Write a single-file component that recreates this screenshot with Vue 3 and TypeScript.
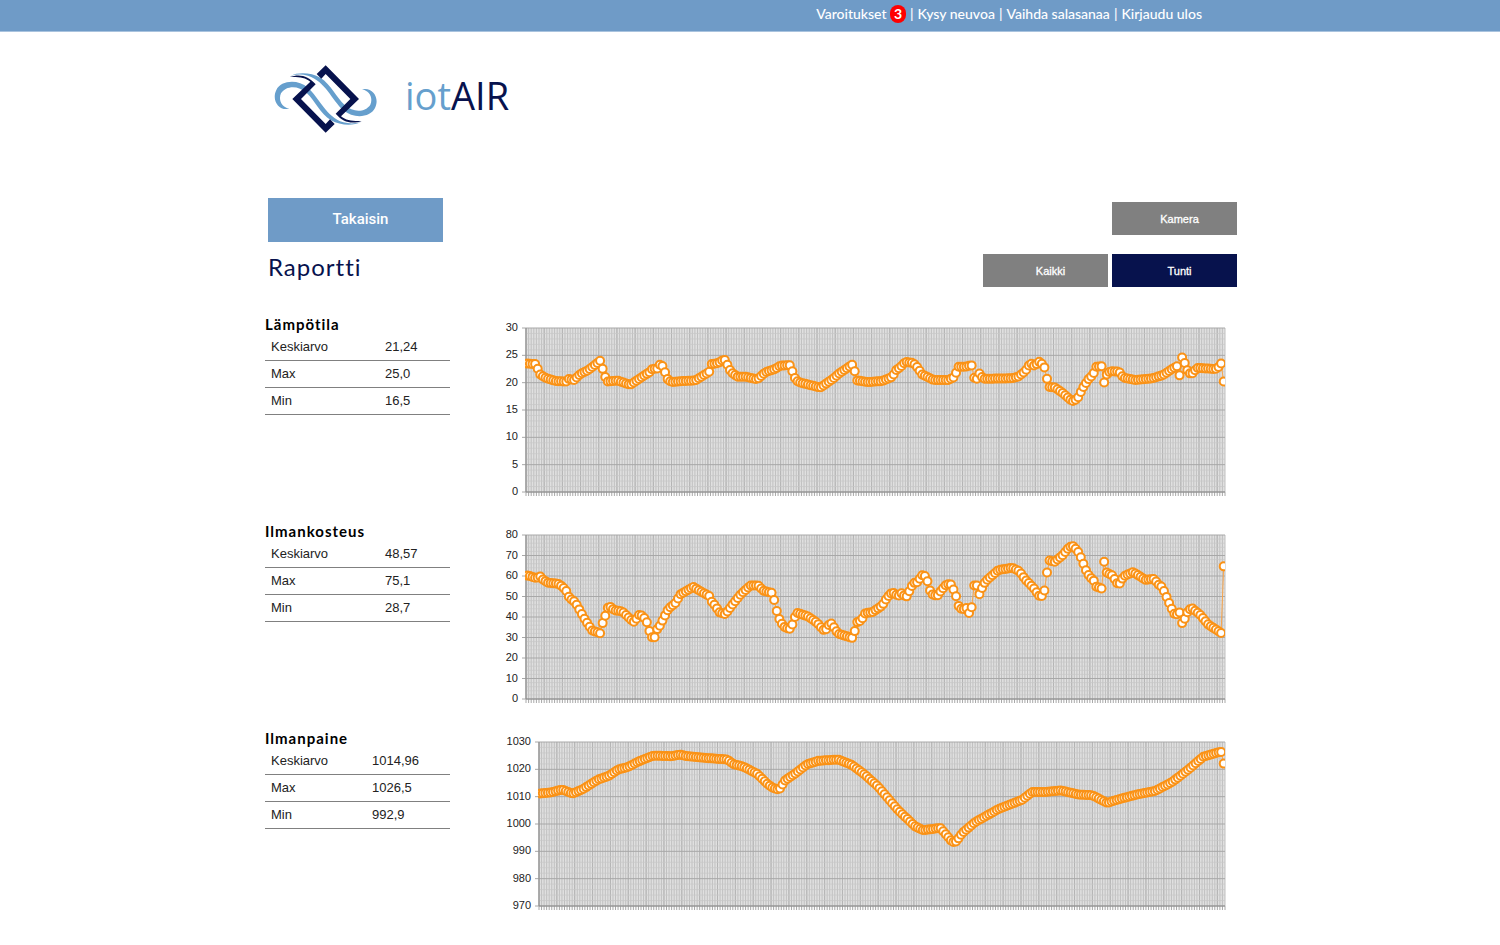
<script setup lang="ts">
import { ref } from 'vue'

type Knot = [number, number]

interface Series {
  id: string
  title: string
  average: string
  max: string
  min: string
  low: number
  high: number
  step: number
  left: number
  wide: boolean
  knots: Knot[]
}

const SAMPLES = 269
const RIGHT = 730
const TOP = 10
const HEIGHT = 164

const sources: Series[] = [
  {
    id: 'temperature',
    title: 'Lämpötila',
    average: '21,24',
    max: '25,0',
    min: '16,5',
    low: 0,
    high: 30,
    step: 5,
    left: 31,
    wide: false,
    knots: [
      [0, 23.5], [8, 23.4], [10.5, 22.5], [13, 21.5], [18, 20.9], [28, 20.3], [39, 20.2], [41, 20.7], [47, 20.5],
      [53, 21.6], [61, 22.3], [72.8, 24], [75.4, 22.5], [78, 21], [80.6, 20.2], [90, 20.4], [103, 19.6], [111, 20.6],
      [122, 21.9], [125, 22.5], [130, 22.6], [132, 23.3], [135, 23.1], [138, 21.8], [140, 20.7], [144, 20.1],
      [155, 20.3], [168, 20.4], [182, 22], [184.5, 23.4], [191, 23.6], [196, 24.2], [198.5, 24.1], [201, 22.8],
      [204, 21.9], [210, 21.1], [218, 21.1], [230, 20.6], [238, 21.9], [248, 22.5], [253, 23.1], [262.4, 23.2],
      [265, 22.1], [267.5, 20.9], [271, 20.1], [293, 19.1], [305, 20.6], [312, 21.7], [324.8, 23.3], [327.4, 22.1],
      [330, 20.4], [341, 20.1], [355, 20.3], [365.5, 21.1], [368, 22.2], [373, 22.8], [378, 23.8], [386, 23.6],
      [390, 22.8], [395, 21.5], [406, 20.5], [421, 20.5], [426, 20.9], [428.5, 21.7], [431, 22.9], [438, 22.9],
      [444.3, 23.2], [446.9, 20.9], [449.5, 20.7], [452, 21.7], [456, 20.7], [485, 20.8], [491, 21.1], [498, 22.1],
      [503, 23.6], [508, 23], [511, 23.9], [514, 23.6], [517.1, 22.8], [519.7, 20.7], [522.3, 19.2], [528, 19.1],
      [536, 18], [545, 16.6], [550, 17], [556, 19.2], [561, 20.6], [566, 21.5], [568.5, 22.9], [574.3, 23],
      [576.9, 20], [579.5, 21.5], [583, 22.1], [592, 22], [596, 20.9], [608, 20.5], [625, 20.8], [636, 21.4],
      [643, 22.3], [649.6, 23], [652.2, 21.3], [654.8, 24.6], [657.4, 23.6], [660, 22.3], [662, 21.7], [665, 21.7],
      [670, 22.7], [688, 22.5], [691, 22.8], [693.8, 23.5], [696.3, 20.2],
    ],
  },
  {
    id: 'humidity',
    title: 'Ilmankosteus',
    average: '48,57',
    max: '75,1',
    min: '28,7',
    low: 0,
    high: 80,
    step: 10,
    left: 31,
    wide: false,
    knots: [
      [1, 60.2], [9, 59], [13, 59.8], [16, 58.1], [21, 56.7], [31, 56.2], [35, 54.9], [40, 52.1], [42, 49.3],
      [48, 47.2], [58, 38.4], [65, 33.4], [72.8, 32.1], [75.4, 37.1], [78, 40.7], [80.6, 44.6], [83, 45], [87, 43.3],
      [95, 42.7], [101, 39.9], [106, 37.6], [108, 38.1], [111, 41], [115, 40.7], [119, 38.3], [122.1, 33.2],
      [124.7, 30.1], [127.3, 30.1], [130, 34.2], [132, 35.2], [136, 39.1], [141, 44], [148, 46.7], [153, 51],
      [166, 54.7], [173, 52.6], [182, 50.2], [185, 46.9], [188, 45.6], [192, 42.3], [198, 41.4], [205, 45.9],
      [213, 50.8], [223, 55.4], [231, 55.4], [236, 52.8], [244.3, 51.8], [246.9, 48.2], [249.5, 42.8], [252, 39.1],
      [256, 35.5], [262, 33.9], [265, 36.3], [267, 39.4], [270, 42], [281, 40.2], [290, 37.1], [296, 33.7],
      [299, 34], [302, 36.6], [305, 37], [307, 34.5], [311, 31.8], [324.8, 29.8], [327.4, 33.1], [330, 37.5],
      [334, 38.3], [338, 41.9], [345, 42.3], [355, 45.6], [360, 49.7], [365, 52.1], [371, 50.2], [374, 51.6],
      [379, 49.7], [381, 51.6], [386, 56.5], [390, 57], [395, 60.4], [398, 59.9], [400, 57.8], [402, 53.6],
      [405, 51.1], [410, 50.2], [413, 52.4], [418, 55.4], [423, 56.4], [426, 53.6], [429, 49.8], [431, 45.6],
      [435, 43.5], [439, 44.5], [441.7, 41.9], [444.3, 44.6], [446.9, 55.4], [449.5, 55.4], [452.1, 51.1],
      [454.7, 54.1], [458, 57.3], [465, 60.3], [471, 62.9], [485, 64], [492, 62.4], [498, 58.3], [508, 53.3],
      [511, 50.5], [514.5, 50.2], [517.1, 52.9], [519.7, 61.7], [522.3, 67.6], [527, 66.8], [535, 70], [541, 73.6],
      [545, 74.9], [550, 72.5], [553, 69.7], [556, 66.1], [559, 62.4], [563, 59.1], [566, 58.6], [568, 55],
      [574.3, 53.9], [576.9, 67.1], [579.5, 61.6], [585, 60.3], [590, 56.4], [593, 56.4], [596, 59.8],
      [606, 61.9], [618, 58.1], [627, 58.6], [631, 55.9], [635, 54.6], [638, 51.1], [640, 49], [643, 45.4],
      [648, 40.7], [652.2, 42.3], [654.8, 37], [657.4, 39.1], [660, 42.3], [664, 44.6], [673, 41], [681, 36.3],
      [693.8, 32.2], [696.3, 64.7],
    ],
  },
  {
    id: 'pressure',
    title: 'Ilmanpaine',
    average: '1014,96',
    max: '1026,5',
    min: '992,9',
    low: 970,
    high: 1030,
    step: 10,
    left: 44,
    wide: true,
    knots: [
      [1, 1011.2], [10, 1011.5], [22, 1012.6], [32, 1011.1], [42, 1012.6], [58, 1016.3], [68, 1017.5],
      [78, 1019.9], [88, 1020.9], [98, 1022.8], [113, 1025], [132, 1024.8], [139, 1025.4], [147, 1024.8],
      [168, 1024.1], [187, 1023.6], [193, 1021.9], [203, 1021], [217, 1018.3], [227, 1014.7], [233, 1013.1],
      [239, 1012.6], [245, 1016], [255, 1018.5], [267, 1021.9], [278, 1023.1], [298, 1023.6], [312, 1021.5],
      [325, 1017.9], [338, 1013.6], [358, 1005], [375, 999.1], [383, 997.7], [400, 998.6], [412, 993.4],
      [416, 993.6], [422, 996.7], [435, 1000.7], [458, 1005.4], [482, 1008.9], [492, 1011.7], [505, 1011.7],
      [520, 1012.3], [538, 1010.8], [552, 1010.5], [567, 1007.7], [578, 1009], [598, 1010.9], [615, 1012.1],
      [632, 1015.4], [648, 1019.9], [663, 1024.6], [680.8, 1026.5], [683.4, 1022.1],
    ],
  },
]

function valueAt(knots: Knot[], x: number): number {
  const next = knots.findIndex((k) => k[0] >= x)
  if (next === -1) return knots[knots.length - 1][1]
  if (next === 0) return knots[0][1]
  const [x0, v0] = knots[next - 1]
  const [x1, v1] = knots[next]
  return v0 + ((v1 - v0) * (x - x0)) / (x1 - x0)
}

function build(s: Series) {
  const pitch = (RIGHT - s.left) / SAMPLES
  const bottom = TOP + HEIGHT
  const toY = (v: number) => bottom - ((v - s.low) / (s.high - s.low)) * HEIGHT

  const points = Array.from({ length: SAMPLES }, (_, i) => ({
    x: s.left + pitch * (i + 0.5),
    y: toY(valueAt(s.knots, pitch * i)),
  }))

  let columns = ''
  let strong = ''
  let ticks = ''
  for (let i = 0; i <= SAMPLES; i++) {
    const x = (s.left + pitch * i).toFixed(2)
    columns += `M${x} ${TOP}V${bottom}`
    ticks += `M${x} ${bottom}v4`
    if (i % 7 === 0) strong += `M${x} ${TOP}V${bottom}`
  }

  let minor = ''
  const labels: { text: string; y: number }[] = []
  for (let v = s.low; v <= s.high; v += s.step) {
    labels.push({ text: String(v), y: toY(v) })
    for (let m = 1; m < 5 && v < s.high; m++) {
      minor += `M${s.left} ${toY(v + (s.step * m) / 5).toFixed(2)}H${RIGHT}`
    }
  }

  return {
    ...s,
    bottom,
    points,
    columns,
    strong,
    ticks,
    minor,
    labels,
    line: points.map((p) => `${p.x.toFixed(2)},${p.y.toFixed(2)}`).join(' '),
    rows: [
      ['Keskiarvo', s.average],
      ['Max', s.max],
      ['Min', s.min],
    ],
  }
}

const charts = sources.map(build)
const range = ref<'Kaikki' | 'Tunti'>('Tunti')
const ranges = ['Kaikki', 'Tunti'] as const
</script>

<template>
  <header class="topbar">
    <nav class="topnav">
      <a href="#">Varoitukset <span class="badge">3</span></a>
      <span>|</span>
      <a href="#">Kysy neuvoa</a>
      <span>|</span>
      <a href="#">Vaihda salasanaa</a>
      <span>|</span>
      <a href="#">Kirjaudu ulos</a>
    </nav>
  </header>

  <main class="page">
    <div class="brand">
      <svg class="mark" viewBox="36 42 324 210" aria-hidden="true">
        <defs>
          <path
            id="wave"
            d="M88 176C56 184 34 150 49 120C62 92 112 86 144 113C178 144 198 200 250 217C268 222 285 221 302 217C280 228 240 227 213 211C180 190 165 152 140 129C114 105 78 107 63 130C54 150 66 172 88 176Z"
          />
          <path id="frame" d="M224 222L197 248L97 147L151 95C136 82 115 80 89 81C120 70 145 78 167 103L123 147L197 222L210 208Z" />
        </defs>
        <g class="mark-blue">
          <use href="#wave" />
          <use href="#wave" transform="rotate(180 197 147)" />
        </g>
        <g class="mark-navy">
          <use href="#frame" />
          <use href="#frame" transform="rotate(180 197 147)" />
        </g>
      </svg>
      <span class="wordmark">iot<b>AIR</b></span>
    </div>

    <div class="toolbar">
      <div class="toolbar-left">
        <button type="button" class="back">Takaisin</button>
        <h1>Raportti</h1>
      </div>
      <div class="toolbar-right">
        <button type="button" class="small">Kamera</button>
        <div class="range">
          <button
            v-for="r in ranges"
            :key="r"
            type="button"
            class="small"
            :class="{ active: range === r }"
            :aria-pressed="range === r"
            @click="range = r"
          >
            {{ r }}
          </button>
        </div>
      </div>
    </div>

    <section v-for="c in charts" :key="c.id" class="report" :aria-labelledby="c.id">
      <div class="summary">
        <h2 :id="c.id">{{ c.title }}</h2>
        <table :class="{ wide: c.wide }">
          <tbody>
            <tr v-for="row in c.rows" :key="row[0]">
              <th scope="row">{{ row[0] }}</th>
              <td>{{ row[1] }}</td>
            </tr>
          </tbody>
        </table>
      </div>

      <svg class="chart" viewBox="0 0 742 184" role="img" :aria-label="c.title">
        <clipPath :id="c.id + '-clip'">
          <rect :x="c.left - 1" y="0" :width="RIGHT - c.left + 1" height="184" />
        </clipPath>
        <rect class="plot" :x="c.left" :y="TOP" :width="RIGHT - c.left" :height="HEIGHT" />
        <path class="columns" :d="c.columns" />
        <path class="strong" :d="c.strong" />
        <path class="minor" :d="c.minor" />
        <path class="ticks" :d="c.ticks" />
        <g v-for="l in c.labels" :key="l.text">
          <line class="major" :x1="c.left - 4" :x2="RIGHT" :y1="l.y" :y2="l.y" />
          <text :x="c.left - 8" :y="l.y + 3">{{ l.text }}</text>
        </g>
        <line class="axis" :x1="c.left" :x2="RIGHT" :y1="c.bottom" :y2="c.bottom" />
        <line class="axis" :x1="c.left" :x2="c.left" :y1="TOP" :y2="c.bottom" />
        <g :clip-path="'url(#' + c.id + '-clip)'">
          <polyline class="line" :points="c.line" />
          <circle v-for="(p, i) in c.points" :key="i" class="dot" :cx="p.x" :cy="p.y" r="4" />
        </g>
      </svg>
    </section>
  </main>
</template>

<style>
body {
  margin: 0;
  background: #fff;
}
</style>

<style scoped>
.topbar {
  height: 32px;
  background: #6f9bc7;
  border-bottom: 1px solid #a9c3de;
  box-sizing: border-box;
}

.topnav,
.page {
  max-width: 974px;
  margin: 0 auto;
  box-sizing: border-box;
}

.topnav {
  display: flex;
  justify-content: flex-end;
  align-items: center;
  gap: 4px;
  height: 28px;
  padding-right: 35px;
  color: #fff;
  font: 500 14px/18px Lato, sans-serif;
}

.topnav a {
  color: inherit;
  text-decoration: none;
}

.badge {
  display: inline-block;
  width: 16px;
  border-radius: 8px;
  background: #f00;
  font-weight: 700;
  text-align: center;
}

.page {
  padding-left: 2px;
}

.brand {
  display: flex;
  align-items: center;
  height: 134px;
}

.mark {
  width: 108px;
  height: 70px;
  margin-left: 7px;
}

.mark-blue {
  fill: #669fcd;
}

.mark-navy {
  fill: #07124d;
}

.wordmark {
  margin-left: 25px;
  padding-bottom: 8px;
  color: #669fcd;
  font: 400 38px/48px "Open Sans", sans-serif;
}

.wordmark b {
  color: #07124d;
  font-weight: 500;
}

.toolbar {
  display: flex;
  justify-content: space-between;
  height: 152px;
  padding-top: 32px;
  box-sizing: border-box;
}

.toolbar-left {
  padding-left: 3px;
}

button {
  display: block;
  border: 0;
  border-radius: 0;
  padding: 0 0 0 10px;
  color: #fff;
  cursor: pointer;
}

.back {
  width: 175px;
  height: 44px;
  padding-bottom: 2px;
  background: #6f9bc7;
  font: 500 15px/18px Roboto, sans-serif;
}

h1 {
  margin: 9px 0 0;
  color: #07124d;
  font: 400 24px/32px Lato, sans-serif;
  letter-spacing: 1px;
}

.toolbar-right {
  display: flex;
  flex-direction: column;
  align-items: flex-end;
  gap: 19px;
  padding-top: 4px;
}

.range {
  display: flex;
  gap: 4px;
}

.small {
  width: 125px;
  height: 33px;
  background: #808080;
  font: 400 11px/14px "Liberation Sans", Arial, sans-serif;
  -webkit-text-stroke: 0.3px #fff;
}

.small.active {
  background: #07124d;
}

.report {
  display: grid;
  grid-template-columns: 185px minmax(0, 1fr);
  column-gap: 45px;
  min-height: 207px;
}

h2 {
  margin: 0 0 4px;
  color: #000;
  font: 700 15px/12px Lato, sans-serif;
  letter-spacing: 1px;
}

table {
  width: 100%;
  border-collapse: collapse;
  color: #222;
  font: 400 13px/26px "Liberation Sans", Arial, sans-serif;
}

tr {
  border-bottom: 1px solid #808080;
}

th,
td {
  padding: 0;
  font-weight: 400;
  text-align: left;
}

th {
  width: 114px;
  padding-left: 6px;
}

.wide th {
  width: 101px;
}

.chart {
  display: block;
  width: 100%;
}

.plot {
  fill: #e0e0e0;
}

.columns,
.strong,
.minor,
.ticks,
.line {
  fill: none;
}

.columns {
  stroke: #c0c0c0;
}

.strong {
  stroke: #b4b4b4;
}

.minor {
  stroke: #c8c8c8;
  stroke-opacity: 0.7;
}

.ticks {
  stroke: #a8a8a8;
}

.major {
  stroke: #a8a8a8;
}

.axis {
  stroke: #8c8c8c;
}

.line {
  stroke: #f9a54b;
}

.dot {
  fill: #fff;
  stroke: #fa9216;
  stroke-width: 2px;
}

text {
  fill: #222;
  font: 400 11px/14px "Liberation Sans", Arial, sans-serif;
  text-anchor: end;
}
</style>
